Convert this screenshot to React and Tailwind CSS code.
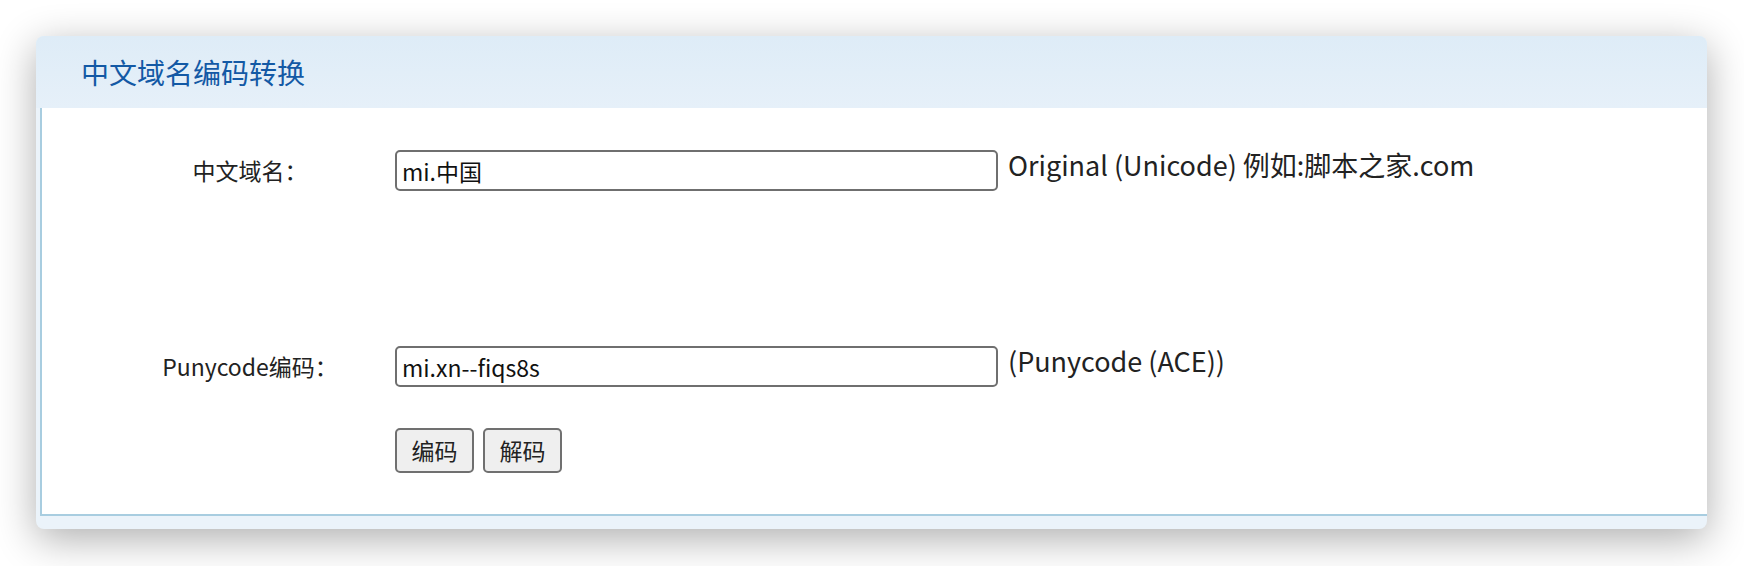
export default function App() {
  const font = { fontFamily: '"Noto Sans CJK SC", "Noto Sans", sans-serif' };

  return (
    <div className="w-[1744px] h-[566px] bg-white pt-[36px] pl-[36px]" style={font}>
      <div className="w-[1671px] rounded-[8px] bg-[#ebf3fa] pl-[4px] pb-[13px] shadow-[0_10px_40px_rgba(0,0,0,0.32)] overflow-hidden">
        {/* title bar */}
        <div className="-ml-[4px] h-[72px] flex items-center pl-[45px] bg-gradient-to-b from-[#deecf7] to-[#e6f0f9]">
          <h1 className="text-[28px] leading-none text-[#1359a5]">中文域名编码转换</h1>
        </div>

        {/* form body */}
        <div className="bg-white border-l-2 border-b-2 border-[#a8cde0] pt-[42px] pb-[41px] pl-[63px] text-[#222]">
          <div className="flex items-center h-[41px]">
            <label className="w-[290px] text-center text-[23px]">中文域名：</label>
            <input
              defaultValue="mi.中国"
              className="w-[603px] h-[41px] rounded-[5px] border-2 border-[#6f6f6f] px-[5px] text-[23px] text-[#111] outline-none"
            />
            <span className="ml-[10px] text-[27px] text-[#222] -mt-[10px]">Original (Unicode) 例如:脚本之家.com</span>
          </div>

          <div className="flex items-center h-[41px] mt-[155px]">
            <label className="w-[290px] text-center text-[23px]">Punycode编码：</label>
            <input
              defaultValue="mi.xn--fiqs8s"
              className="w-[603px] h-[41px] rounded-[5px] border-2 border-[#6f6f6f] px-[5px] text-[23px] text-[#111] outline-none"
            />
            <span className="ml-[10px] text-[27px] text-[#222] -mt-[10px]">(Punycode (ACE))</span>
          </div>

          <div className="flex gap-[9px] mt-[41px] ml-[290px]">
            <button className="w-[79px] h-[45px] rounded-[5px] border-2 border-[#707070] bg-[#efefef] text-[23px] text-[#222]">编码</button>
            <button className="w-[79px] h-[45px] rounded-[5px] border-2 border-[#707070] bg-[#efefef] text-[23px] text-[#222]">解码</button>
          </div>
        </div>
      </div>
    </div>
  );
}
